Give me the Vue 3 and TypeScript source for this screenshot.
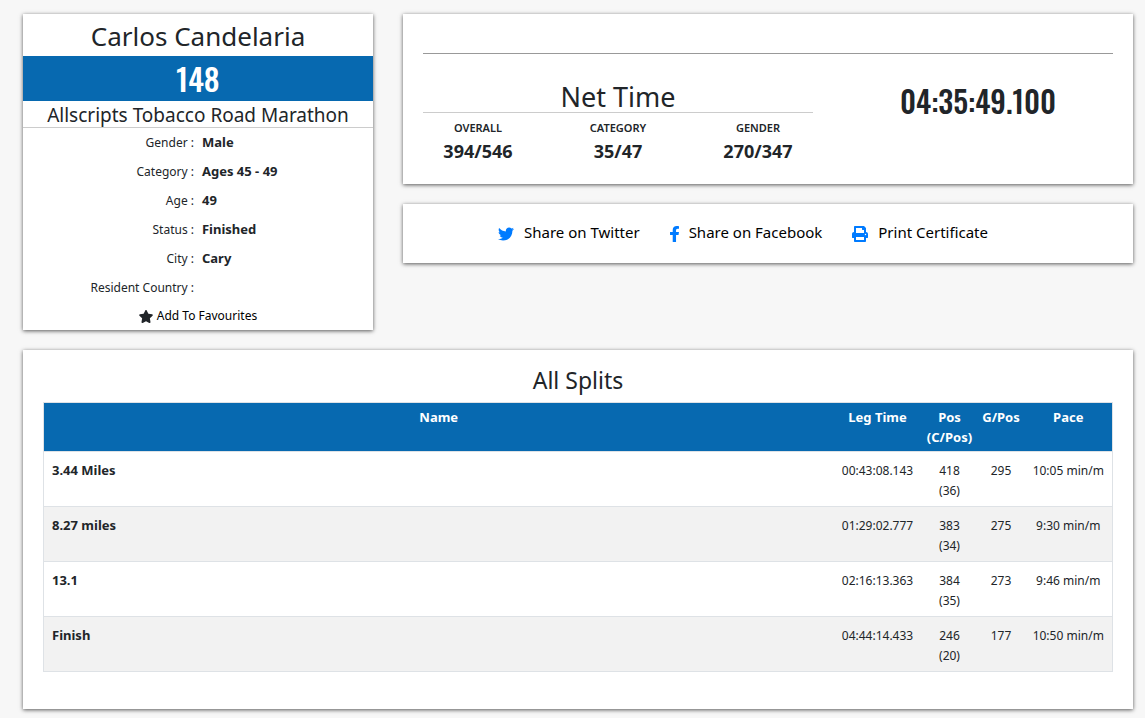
<script setup lang="ts">
interface Detail { label: string; value: string }
interface Rank { label: string; value: string }
interface Split { name: string; leg: string; pos: number; cpos: number; gpos: number; pace: string }

const details: Detail[] = [
  { label: 'Gender', value: 'Male' },
  { label: 'Category', value: 'Ages 45 - 49' },
  { label: 'Age', value: '49' },
  { label: 'Status', value: 'Finished' },
  { label: 'City', value: 'Cary' },
  { label: 'Resident Country', value: '' },
]

const ranks: Rank[] = [
  { label: 'OVERALL', value: '394/546' },
  { label: 'CATEGORY', value: '35/47' },
  { label: 'GENDER', value: '270/347' },
]

const splits: Split[] = [
  { name: '3.44 Miles', leg: '00:43:08.143', pos: 418, cpos: 36, gpos: 295, pace: '10:05 min/m' },
  { name: '8.27 miles', leg: '01:29:02.777', pos: 383, cpos: 34, gpos: 275, pace: '9:30 min/m' },
  { name: '13.1', leg: '02:16:13.363', pos: 384, cpos: 35, gpos: 273, pace: '9:46 min/m' },
  { name: 'Finish', leg: '04:44:14.433', pos: 246, cpos: 20, gpos: 177, pace: '10:50 min/m' },
]
</script>

<template>
  <main class="page">
    <section class="card profile">
      <h1 class="name">Carlos Candelaria</h1>
      <div class="bib">148</div>
      <h2 class="event">Allscripts Tobacco Road Marathon</h2>
      <dl class="details">
        <div v-for="d in details" :key="d.label" class="detail">
          <dt>{{ d.label }} :</dt>
          <dd>{{ d.value }}</dd>
        </div>
      </dl>
      <button type="button" class="favourite">
        <svg width="14" height="13" viewBox="20 0 536 512" aria-hidden="true">
          <path fill="currentColor" d="M259.3 17.8L194 150.2 47.9 171.5c-26.2 3.8-36.700 36.100-17.700 54.600l105.700 103-25 145.500c-4.500 26.300 23.200 46 46.400 33.700L288 439.600l130.700 68.700c23.200 12.200 50.900-7.400 46.400-33.700l-25-145.500 105.700-103c19-18.500 8.500-50.800-17.700-54.600L382 150.200 316.700 17.800c-11.700-23.600-45.600-23.900-57.400 0z" />
        </svg>
        <span>Add To Favourites</span>
      </button>
    </section>

    <div class="side">
      <section class="card result">
        <hr class="rule" />
        <div class="result-row">
          <div>
            <h2 class="net">Net Time</h2>
            <div class="ranks">
              <div v-for="r in ranks" :key="r.label" class="rank">
                <div class="rank-label">{{ r.label }}</div>
                <div class="rank-value">{{ r.value }}</div>
              </div>
            </div>
          </div>
          <div class="time">04:35:49.100</div>
        </div>
      </section>

      <nav class="card share" aria-label="Share">
        <a href="#twitter">
          <svg width="16" height="16" viewBox="0 0 512 512" aria-hidden="true">
            <path fill="#007bff" d="M459.370 151.716c.325 4.548.325 9.097.325 13.645 0 138.720-105.583 298.558-298.558 298.558-59.452 0-114.680-17.219-161.137-47.106 8.447.974 16.568 1.299 25.340 1.299 49.055 0 94.213-16.568 130.274-44.832-46.132-.975-84.792-31.188-98.112-72.772 6.498.974 12.995 1.624 19.818 1.624 9.421 0 18.843-1.300 27.614-3.573-48.081-9.747-84.143-51.980-84.143-102.985v-1.299c13.969 7.797 30.214 12.670 47.431 13.319-28.264-18.843-46.781-51.005-46.781-87.391 0-19.492 5.197-37.360 14.294-52.954 51.655 63.675 129.300 105.258 216.365 109.807-1.624-7.797-2.599-15.918-2.599-24.040 0-57.828 46.782-104.934 104.934-104.934 30.213 0 57.502 12.670 76.670 33.137 23.715-4.548 46.456-13.320 66.599-25.340-7.798 24.366-24.366 44.833-46.132 57.827 21.117-2.273 41.584-8.122 60.426-16.243-14.292 20.791-32.161 39.308-52.628 54.253z" />
          </svg>
          <span>Share on Twitter</span>
        </a>
        <a href="#facebook">
          <svg width="9" height="16" viewBox="22 0 272 512" preserveAspectRatio="none" aria-hidden="true">
            <path fill="#007bff" d="M279.140 288l14.220-92.660h-88.910v-60.130c0-25.350 12.420-50.060 52.240-50.060h40.420V6.260S260.430 0 225.360 0c-73.220 0-121.080 44.380-121.080 124.720v70.620H22.890V288h81.390v224h100.170V288z" />
          </svg>
          <span>Share on Facebook</span>
        </a>
        <a href="#certificate">
          <svg width="16" height="16" viewBox="0 0 512 512" aria-hidden="true">
            <path fill="#007bff" d="M448 192V77.250c0-8.490-3.370-16.620-9.370-22.630L393.370 9.370c-6-6-14.140-9.370-22.630-9.370H96C78.330 0 64 14.330 64 32v160c-35.350 0-64 28.650-64 64v112c0 8.840 7.160 16 16 16h48v96c0 17.670 14.330 32 32 32h320c17.670 0 32-14.330 32-32v-96h48c8.840 0 16-7.160 16-16V256c0-35.350-28.650-64-64-64zm-64 256H128v-96h256v96zm0-224H128V64h192v48c0 8.840 7.160 16 16 16h48v96zm48 72c-13.250 0-24-10.750-24-24 0-13.260 10.750-24 24-24s24 10.740 24 24c0 13.250-10.750 24-24 24z" />
          </svg>
          <span>Print Certificate</span>
        </a>
      </nav>
    </div>

    <section class="card splits">
      <h2 class="splits-title">All Splits</h2>
      <table>
        <colgroup>
          <col />
          <col class="col-wide" />
          <col class="col-pos" />
          <col class="col-gpos" />
          <col class="col-wide" />
        </colgroup>
        <thead>
          <tr>
            <th scope="col">Name</th>
            <th scope="col">Leg Time</th>
            <th scope="col">Pos<br />(C/Pos)</th>
            <th scope="col">G/Pos</th>
            <th scope="col">Pace</th>
          </tr>
        </thead>
        <tbody>
          <tr v-for="s in splits" :key="s.name">
            <th scope="row">{{ s.name }}</th>
            <td>{{ s.leg }}</td>
            <td>{{ s.pos }}<br />({{ s.cpos }})</td>
            <td>{{ s.gpos }}</td>
            <td>{{ s.pace }}</td>
          </tr>
        </tbody>
      </table>
    </section>
  </main>
</template>

<style>
body {
  margin: 0;
  background: #f7f7f7;
}
</style>

<style scoped>
.page {
  display: grid;
  grid-template-columns: calc((100% + 30px) / 3 - 30px) minmax(0, 1fr);
  gap: 20px 30px;
  align-items: start;
  box-sizing: border-box;
  padding: 14px 12px 8px 23px;
  color: #212529;
  font-family: "Segoe UI", "Noto Sans", "Open Sans", sans-serif;
  font-size: 12px;
  line-height: 20px;
}
.card {
  background: #fff;
  box-shadow: 0 1px 4px rgba(0, 0, 0, 0.65);
}
h1, h2, dl, dd {
  margin: 0;
  font-weight: 400;
}
.profile {
  text-align: center;
}
.name {
  font-size: 26px;
  line-height: 40px;
  padding-top: 2px;
}
.bib {
  background: #0769b0;
  color: #fff;
  font-family: Oswald, "Roboto Condensed", "Liberation Sans Narrow", Roboto, sans-serif;
  font-size: 31px;
  font-weight: 500;
  line-height: 45px;
}
.event {
  font-size: 19px;
  line-height: 24px;
  padding-top: 2px;
  border-bottom: 1px solid #ccc;
}
.detail {
  display: grid;
  grid-template-columns: 1fr 1fr;
  line-height: 29px;
}
dt {
  text-align: right;
  padding-right: 4px;
}
dd {
  text-align: left;
  padding-left: 4px;
  font-size: 13px;
  font-weight: 700;
}
.favourite {
  display: inline-flex;
  align-items: center;
  gap: 4px;
  height: 28px;
  padding: 0;
  border: 0;
  background: none;
  color: #212529;
  font: inherit;
  cursor: pointer;
  vertical-align: top;
}
.favourite span {
  color: #000;
}
.side {
  display: grid;
  gap: 20px;
}
.result {
  padding: 39px 20px 20px;
}
.rule {
  margin: 0 0 28px;
  border: 0;
  border-top: 1px solid #999;
}
.result-row {
  display: grid;
  grid-template-columns: 39fr 27fr;
  gap: 30px;
  text-align: center;
}
.net {
  font-size: 27px;
  line-height: 30px;
  border-bottom: 1px solid #ccc;
}
.ranks {
  display: grid;
  grid-template-columns: repeat(3, 1fr);
  gap: 30px;
  padding-top: 5px;
  font-weight: 700;
}
.rank-label {
  font-size: 11px;
  font-weight: 600;
}
.rank-value {
  font-size: 18px;
  line-height: 26px;
}
.time {
  font-family: Oswald, "Roboto Condensed", "Liberation Sans Narrow", Roboto, sans-serif;
  font-size: 30px;
  font-weight: 500;
  line-height: 38px;
}
.share {
  display: flex;
  justify-content: center;
  gap: 30px;
  padding: 16px 70px 19px 20px;
  font-size: 15px;
  line-height: 24px;
}
.share a {
  display: inline-flex;
  align-items: center;
  gap: 10px;
  color: #000;
  text-decoration: none;
}
.share svg {
  margin-top: 4px;
}
.splits {
  grid-column: 1 / -1;
  padding: 15px 20px 37px;
}
.splits-title {
  font-size: 23px;
  line-height: 30px;
  margin-bottom: 7px;
  text-align: center;
}
table {
  width: 100%;
  table-layout: fixed;
  border-collapse: collapse;
  border: 1px solid #dee2e6;
  text-align: center;
}
.col-wide {
  width: 88px;
}
.col-pos {
  width: 56px;
}
.col-gpos {
  width: 47px;
}
th {
  font-size: 13px;
}
thead th {
  padding: 4px 0;
  background: #0769b0;
  color: #fff;
  vertical-align: top;
}
tbody th,
tbody td {
  padding: 9px 0 5px;
  border-top: 1px solid #dee2e6;
  vertical-align: top;
}
tbody th {
  padding-top: 8px;
  padding-left: 8px;
  text-align: left;
}
tbody tr:nth-child(even) {
  background: #f2f2f2;
}
</style>
